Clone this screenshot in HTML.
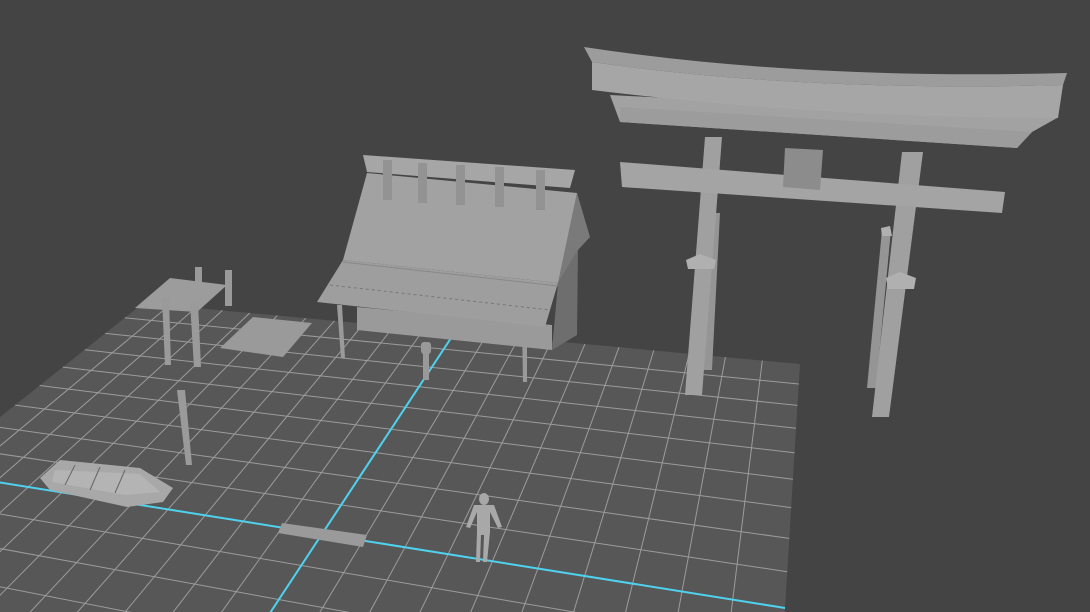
<!DOCTYPE html>
<html><head><meta charset="utf-8"><style>
html,body{margin:0;padding:0;background:#444;overflow:hidden;width:1090px;height:612px}
svg{display:block;overflow:hidden}
</style></head><body>
<svg width="1090" height="612" viewBox="0 0 1090 612" xmlns="http://www.w3.org/2000/svg">
<defs><clipPath id="c"><rect width="1090" height="612"/></clipPath></defs>
<g clip-path="url(#c)">
<rect width="1090" height="612" fill="#444"/>
<polygon points="143.3,303.1 800,364 736.9,1391.3 -591.8,887.9" fill="#575757"/>
<g stroke="#9c9c9c" stroke-width="1" fill="none">
<line x1="169.2" y1="305.5" x2="-551.1" y2="903.3"/>
<line x1="195.6" y1="307.9" x2="-508.9" y2="919.3"/>
<line x1="222.4" y1="310.4" x2="-465.2" y2="935.8"/>
<line x1="249.7" y1="313.0" x2="-419.8" y2="953.0"/>
<line x1="277.4" y1="315.5" x2="-372.6" y2="970.9"/>
<line x1="305.7" y1="318.2" x2="-323.7" y2="989.4"/>
<line x1="334.5" y1="320.8" x2="-272.7" y2="1008.7"/>
<line x1="363.8" y1="323.5" x2="-219.7" y2="1028.8"/>
<line x1="393.6" y1="326.3" x2="-164.5" y2="1049.8"/>
<line x1="424.0" y1="329.1" x2="-107.0" y2="1071.6"/>
<line x1="486.6" y1="334.9" x2="15.8" y2="1118.1"/>
<line x1="518.7" y1="337.9" x2="81.4" y2="1142.9"/>
<line x1="551.5" y1="340.9" x2="150.0" y2="1168.9"/>
<line x1="584.9" y1="344.1" x2="221.9" y2="1196.2"/>
<line x1="619.0" y1="347.2" x2="297.3" y2="1224.7"/>
<line x1="653.8" y1="350.4" x2="376.4" y2="1254.7"/>
<line x1="689.2" y1="353.7" x2="459.6" y2="1286.2"/>
<line x1="725.4" y1="357.1" x2="547.2" y2="1319.4"/>
<line x1="762.3" y1="360.5" x2="639.5" y2="1354.4"/>
<line x1="124.8" y1="317.8" x2="798.8" y2="384.0"/>
<line x1="105.3" y1="333.4" x2="797.5" y2="405.4"/>
<line x1="84.7" y1="349.8" x2="796.1" y2="428.3"/>
<line x1="62.8" y1="367.1" x2="794.5" y2="452.8"/>
<line x1="39.7" y1="385.5" x2="792.9" y2="479.2"/>
<line x1="15.2" y1="405.1" x2="791.2" y2="507.6"/>
<line x1="-11.0" y1="425.8" x2="789.3" y2="538.4"/>
<line x1="-38.8" y1="448.0" x2="787.2" y2="571.7"/>
<line x1="-100.3" y1="496.9" x2="782.6" y2="647.6"/>
<line x1="-134.4" y1="524.0" x2="779.9" y2="691.1"/>
<line x1="-171.1" y1="553.2" x2="777.0" y2="739.1"/>
<line x1="-210.6" y1="584.7" x2="773.7" y2="792.2"/>
</g>
<g stroke="#4fd2ef" stroke-width="2">
<line x1="455" y1="332" x2="-46.9" y2="1094.3"/>
<line x1="-68.5" y1="471.6" x2="785" y2="608"/>
</g>
<g>
<rect x="195" y="267" width="7" height="18" fill="#9a9a9a"/>
<rect x="225" y="270" width="7" height="36" fill="#9a9a9a"/>
<polygon points="135,308 170,278 227,285 197,312" fill="#9c9c9c"/>
<polygon points="162,298 169,298 171,365 165,365" fill="#9a9a9a"/>
<polygon points="190,302 198,302 201,367 194,367" fill="#9a9a9a"/>
<polygon points="253,317 312,323 283,357 220,348" fill="#9a9a9a"/>
<polygon points="558,283 578,250 577,335 552,350" fill="#6e6e6e"/>
<polygon points="577,193 590,237 578,250 558,283" fill="#7a7a7a"/>
<polygon points="357,307 552,325 552,350 357,330" fill="#9a9a9a"/>
<polygon points="367,173 577,193 558,283 343,260" fill="#a2a2a2"/>
<polygon points="343,260 558,283 545,327 317,302" fill="#9e9e9e"/>
<line x1="343" y1="262" x2="558" y2="286" stroke="#888" stroke-width="1"/>
<line x1="330" y1="285" x2="550" y2="310" stroke="#777" stroke-width="1" stroke-dasharray="3 3"/>
<polygon points="363,155 575,170 570,188 367,172" fill="#a6a6a6"/>
<rect x="383" y="160" width="9" height="40" fill="#939393"/>
<rect x="418" y="163" width="9" height="40" fill="#939393"/>
<rect x="456" y="165" width="9" height="40" fill="#939393"/>
<rect x="495" y="167" width="9" height="40" fill="#939393"/>
<rect x="536" y="170" width="9" height="40" fill="#939393"/>
<polygon points="337,305 342,305 345,358 341,358" fill="#9a9a9a"/>
<polygon points="522,327 527,327 527,382 523,382" fill="#9a9a9a"/>
<rect x="421" y="342" width="10" height="12" rx="3" fill="#999"/>
<rect x="423" y="352" width="6" height="28" fill="#999"/>
<polygon points="177,390 185,390 192,465 186,465" fill="#9a9a9a"/>
<polygon points="40,478 60,460 140,468 173,488 163,502 127,507 50,490" fill="#a8a8a8"/>
<polygon points="55,470 140,474 160,492 125,495 52,482" fill="#b4b4b4"/>
<line x1="75" y1="465" x2="65" y2="485" stroke="#666"/><line x1="100" y1="467" x2="90" y2="490" stroke="#666"/><line x1="125" y1="470" x2="115" y2="493" stroke="#666"/>
<polygon points="282,523 367,535 363,547 278,533" fill="#9a9a9a"/>
<g fill="#a8a8a8">
<ellipse cx="484" cy="499" rx="5" ry="6"/>
<polygon points="474,505 494,505 502,527 498,528 490,512 490,532 487,562 483,562 484,535 481,535 480,562 476,562 477,532 477,512 470,528 466,527"/>
</g>
<polygon points="711,213 720,213 712,370 702,370" fill="#959595"/>
<polygon points="882,230 891,230 876,388 867,388" fill="#959595"/>
<polygon points="705,137 722,137 702,395 685,395" fill="#a0a0a0"/>
<polygon points="902,152 923,152 889,417 872,417" fill="#a0a0a0"/>
<polygon points="686,260 700,254 716,260 714,269 688,269" fill="#b0b0b0"/>
<polygon points="886,278 900,272 916,278 914,289 888,289" fill="#b0b0b0"/>
<polygon points="881,228 890,226 892,236 882,236" fill="#b0b0b0"/>
<polygon points="620,162 1005,192 1002,213 622,187" fill="#a4a4a4"/>
<polygon points="785,148 823,150 820,190 783,187" fill="#8c8c8c"/>
<polygon points="610,95 1057,118 1032,132 1017,148 620,122" fill="#a2a2a2"/>
<polygon points="620,107 1032,132 1017,148 620,122" fill="#9c9c9c"/>
<path d="M592,62 Q800,92 1063,85 L1058,118 Q820,118 592,90 Z" fill="#a6a6a6"/>
<path d="M584,47 Q800,80 1067,73 L1063,85 Q800,92 592,62 Z" fill="#9c9c9c"/>
</g>
</g>
</svg>
</body></html>
